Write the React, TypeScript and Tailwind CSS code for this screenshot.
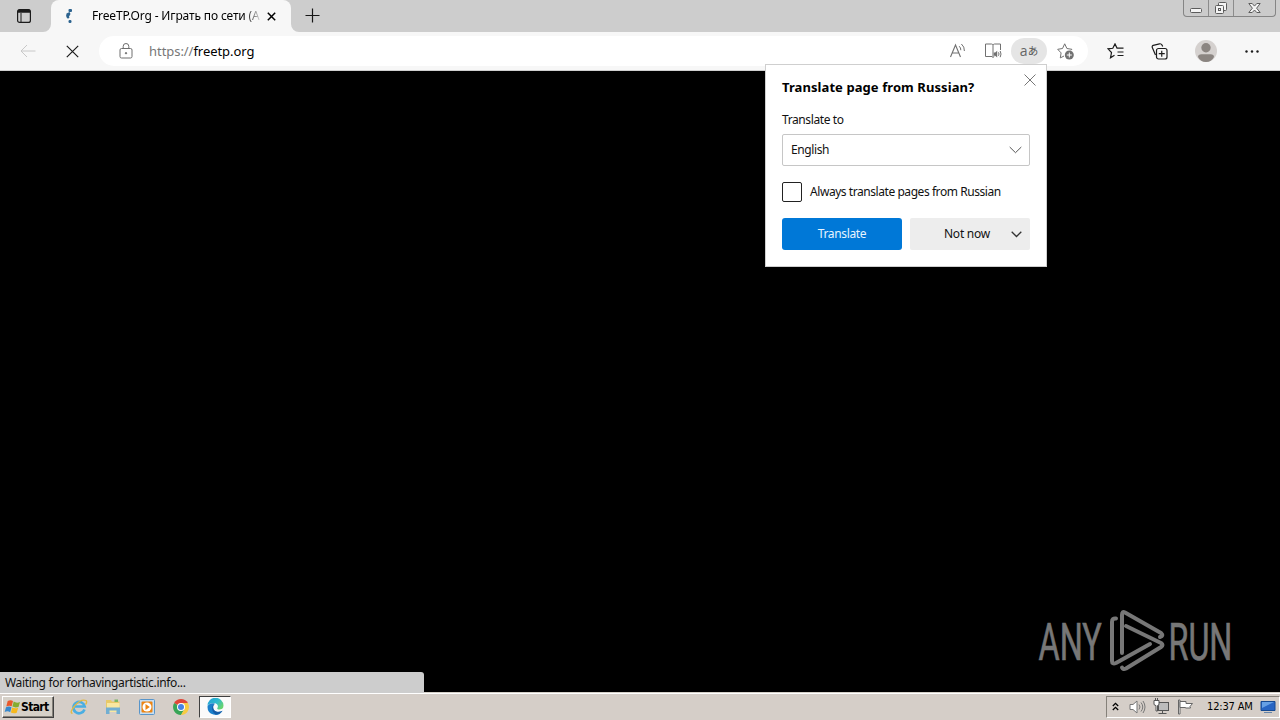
import type { ReactNode } from "react";

/* ---------- Icon wrapper ---------- */
type IconProps = { w: number; h: number; className?: string; children: ReactNode };

function Icon({ w, h, className = "", children }: IconProps) {
  return (
    <svg
      width={w}
      height={h}
      viewBox={`0 0 ${w} ${h}`}
      fill="none"
      stroke="currentColor"
      strokeWidth="1"
      className={`block shrink-0 ${className}`}
    >
      {children}
    </svg>
  );
}

/* ---------- Tab strip ---------- */
function WindowControls() {
  return (
    <div className="ml-auto mr-1 flex h-[17px] w-[93px] rounded-b-[4px] border border-t-0 border-[#858585] bg-[#cbcbcb] text-[#5c5c5c]">
      <div className="flex w-[25px] justify-center border-r border-[#8c8c8c] pt-2">
        <Icon w={13} h={5}>
          <rect x="0.5" y="0.5" width="11" height="4" rx="1" fill="#f4f4f4" />
        </Icon>
      </div>
      <div className="flex w-[25px] justify-center border-r border-[#8c8c8c] pt-[2px]">
        <Icon w={13} h={13}>
          <rect x="3.5" y="0.5" width="8" height="8" rx="1" fill="#f4f4f4" />
          <rect x="0.5" y="3.5" width="8" height="8" rx="1" fill="#f4f4f4" />
          <rect x="3.5" y="6.5" width="2" height="2" />
        </Icon>
      </div>
      <div className="flex flex-1 justify-center pt-[3px]">
        <Icon w={13} h={11}>
          <path d="M0.8 0.5h3.4l2.3 2.6L8.8.5h3.4L8.6 5.2l3.6 4.3H8.8L6.5 7 4.2 9.500H.8l3.6-4.300z" fill="#f4f4f4" />
        </Icon>
      </div>
    </div>
  );
}

function TabStrip() {
  return (
    <div className="flex h-8 bg-[#cdcdcd]">
      <div className="flex w-[43px] items-center pl-[17px]">
        <Icon w={14} h={14} className="text-[#1b1b1b]">
          <rect x="0.6" y="0.6" width="12.8" height="12.8" rx="2" strokeWidth="1.2" />
          <path d="M1 1.500h12M1 3h12" strokeWidth="1.700" />
          <path d="M4 4v9" />
        </Icon>
      </div>
      <Icon w={8} h={8} className="self-end text-[#f7f7f7]">
        <path d="M8 0v8H0a8 8 0 0 0 8-8z" fill="currentColor" stroke="none" />
      </Icon>
      <div className="flex w-[240px] items-center rounded-t-lg bg-[#f7f7f7]">
        <Icon w={8} h={16} className="ml-[14px]">
          <g stroke="none" fill="#2c638f">
            <rect x="3.5" y="1" width="3.5" height="3" rx="1" />
            <path d="M1.500 5.500l3-1.500 1 2-2 3.500L1 8.500z" />
            <circle cx="3" cy="9.3" r="1.2" />
            <rect x="3.5" y="12" width="3" height="3" rx="1.2" />
          </g>
        </Icon>
        <span className="ml-[19px] w-[170px] overflow-hidden whitespace-nowrap bg-linear-to-r from-black from-88% to-[#f7f7f7] bg-clip-text font-['Noto_Sans'] text-[12px] leading-[18px] tracking-[-0.14px] text-transparent">
          FreeTP.Org - Играть по сети (A
        </span>
        <Icon w={9} h={9} className="ml-[5px] text-black">
          <path d="M.8.8l7.400 7.400M8.200.8L.8 8.200" strokeWidth="1.5" />
        </Icon>
      </div>
      <Icon w={8} h={8} className="self-end text-[#f7f7f7]">
        <path d="M0 0v8h8a8 8 0 0 1-8-8z" fill="currentColor" stroke="none" />
      </Icon>
      <Icon w={15} h={15} className="ml-[6px] mt-2 text-[#161616]">
        <path d="M7.500.5v14M.5 7.500h14" strokeWidth="1.2" />
      </Icon>
      <WindowControls />
    </div>
  );
}

/* ---------- Toolbar ---------- */
function AddressBar() {
  return (
    <div className="ml-[19px] flex h-[30px] w-[989px] items-center rounded-full bg-white">
      <Icon w={14} h={16} className="ml-[20px] text-[#6e6e6e]">
        <rect x="1" y="5.5" width="12" height="9.5" rx="1.5" />
        <path d="M4.200 5.500V3.300a2.800 2.800 0 0 1 5.600 0v2.200" />
        <circle cx="7" cy="10.2" r="0.7" fill="currentColor" />
      </Icon>
      <span className="ml-[16px] whitespace-nowrap font-['Noto_Sans'] text-[13px] leading-5 tracking-[-0.05px] text-[#777]">
        https://<span className="text-black">freetp.org</span>
      </span>
      <div className="ml-auto flex items-center text-[#717171]">
        <Icon w={18} h={16} className="mr-[17px]">
          <path d="M1.500 14L6.500 2l5 12M3.300 10h6.400" strokeWidth="1.1" />
          <path d="M10.200 3.200a5 5 0 0 1 1.600 4M12.400 1a8.500 8.500 0 0 1 3 7" />
        </Icon>
        <Icon w={18} h={16} className="mr-[9px]">
          <path d="M9 14.500V2M9 2Q8.500 1 7.500 1H1.500v12.500H8l1 1 1-1M9 2q.5-1 1.500-1h6v6" />
          <path d="M9.700 9.500h1.500l2-1.700v6.700l-2-1.700H9.700z" fill="currentColor" stroke="none" />
          <path d="M14.500 9.300q1 1.700 0 3.500M16.200 8q1.600 3 0 6.200" />
        </Icon>
        <div className="flex h-[26px] w-[36px] items-center justify-center rounded-full bg-[#e5e5e5]">
          <span className="font-['Open_Sans'] text-[14px] leading-4 text-[#666]">a</span>
          <span className="font-['Noto_Sans_CJK_JP',sans-serif] text-[10.5px] leading-4 text-[#555]">あ</span>
        </div>
        <Icon w={18} h={18} className="ml-[10px] mr-[13px]">
          <path d="M7 14l-3.700 1.900.8-5L.7 7.300l4.800-.8L7.700 1.800l2.200 4.700 5 .8-1 1" />
          <circle cx="12.3" cy="13" r="4.5" fill="currentColor" stroke="none" />
          <path d="M12.300 10.500v5M9.800 13h5" stroke="#fff" />
        </Icon>
      </div>
    </div>
  );
}

function Toolbar() {
  return (
    <div className="flex h-[39px] items-center border-b border-[#d0d0d0] bg-[#f7f7f7] text-[#1c1c1c]">
      <Icon w={16} h={14} className="ml-[20px] text-[#c8c8c8]">
        <path d="M15.500 7H1M7 1L1 7l6 6" />
      </Icon>
      <Icon w={13} h={13} className="ml-[29.5px] mr-[1.5px]">
        <path d="M.8.8l11.400 11.400M12.200.8L.8 12.200" strokeWidth="1.2" />
      </Icon>
      <AddressBar />
      <Icon w={18} h={16} className="ml-[19px]">
        <path d="M7.500 12.200l-4 2.600 1-5.300L1 5.800l4.800-.5L8 .9l2 4.200h6.500M10.500 9h6M10.500 12.500h6" strokeWidth="1.2" />
      </Icon>
      <Icon w={17} h={17} className="ml-[26px]">
        <path d="M4.500 12L1.500 5Q.6 3 2.200 2.400L8.500.8q1.700-.3 2.500 1.200l.7 1.500" strokeWidth="1.2" />
        <rect x="5.5" y="5.5" width="10.5" height="10.5" rx="2" strokeWidth="1.2" />
        <path d="M10.750 7.700v6M7.750 10.700h6" strokeWidth="1.2" />
      </Icon>
      <Icon w={22} h={22} className="ml-[27px]">
        <g stroke="none">
          <circle cx="11" cy="11" r="11" fill="#d5d1cf" />
          <circle cx="11" cy="7.7" r="4.7" fill="#8b8581" />
          <path d="M3 17Q3 14.200 6.500 14.200h9Q19 14.200 19 17 16.500 22 11 22t-8-5z" fill="#8b8581" />
        </g>
      </Icon>
      <Icon w={14} h={3} className="ml-[28px]">
        <g fill="currentColor" stroke="none">
          <circle cx="1.5" cy="1.5" r="1.2" />
          <circle cx="7" cy="1.5" r="1.2" />
          <circle cx="12.5" cy="1.5" r="1.2" />
        </g>
      </Icon>
    </div>
  );
}

/* ---------- Translate popup ---------- */
function TranslatePopup() {
  return (
    <div className="absolute left-[765px] top-[64px] h-[203px] w-[282px] border border-[#cfcfcf] bg-white px-4 font-['Noto_Sans'] text-[12px] leading-4 text-[#111]">
      <div className="flex h-[30px] items-end justify-between">
        <h1 className="whitespace-nowrap text-[13px] font-bold leading-4 tracking-[0.08px] text-black">
          Translate page from Russian?
        </h1>
        <button className="mb-[9px] -mr-[6px]" aria-label="Close">
          <Icon w={12} h={12} className="text-[#777]">
            <path d="M.5.5l11 11M11.500.5l-11 11" />
          </Icon>
        </button>
      </div>
      <div className="mt-[17px] tracking-[-0.4px]">Translate to</div>
      <div className="mt-[6px] flex h-8 items-center justify-between rounded-[2px] border border-[#c6c6c6] pl-2 pr-[7px]">
        <span className="tracking-[-0.4px]">English</span>
        <Icon w={13} h={8} className="text-[#555]">
          <path d="M.7 1l5.800 5.700L12.300 1" />
        </Icon>
      </div>
      <div className="mt-4 flex h-5 items-center gap-2">
        <div className="h-5 w-5 rounded-[2px] border border-[#222]" />
        <span className="whitespace-nowrap tracking-[-0.44px]">Always translate pages from Russian</span>
      </div>
      <div className="mt-4 flex gap-2">
        <button className="h-8 w-[120px] rounded-[3px] bg-[#0078d7] tracking-[-0.35px] text-[#e6f4ff]">Translate</button>
        <button className="flex h-8 w-[120px] items-center rounded-[2px] bg-[#ededed] pl-[34px] tracking-[-0.25px]">
          <span>Not now</span>
          <Icon w={11} h={7} className="ml-auto mr-[8px] text-[#333]">
            <path d="M.7.8l4.800 4.700L10.300.8" strokeWidth="1.3" />
          </Icon>
        </button>
      </div>
    </div>
  );
}

/* ---------- ANY.RUN watermark ---------- */
function Watermark() {
  return (
    <div className="mb-5 ml-auto mr-[44px] flex h-[62px] w-[198px] items-center text-[#777]">
      <svg width="198" height="62" viewBox="0 0 198 62" className="block overflow-visible" fill="none">
        <g fill="currentColor" stroke="currentColor" strokeWidth="0.7" className="font-['Roboto']" fontSize="51">
          <text transform="translate(0.5 49.5) scale(.68 1)" textLength="93" lengthAdjust="spacingAndGlyphs">ANY</text>
          <text transform="translate(130.5 49.5) scale(.68 1)" textLength="94" lengthAdjust="spacingAndGlyphs">RUN</text>
        </g>
        <g stroke="currentColor" strokeWidth="4" strokeLinecap="round" strokeLinejoin="round">
          <path d="M84 43V5q0-4 3-2.500l36 20.500q3 3-1 4" />
          <path d="M78 8.500q-4-.5-4 3.500v39q0 3.500 4 2L112 34" />
          <path d="M88 16l35 17q3 2 0 4L88 58.500q-3 1.500-4-1" />
        </g>
      </svg>
    </div>
  );
}

/* ---------- Taskbar ---------- */
function StartButton() {
  return (
    <button className="ml-[2px] flex h-[22px] w-[52px] items-center border border-b-[#404040] border-l-white border-r-[#404040] border-t-white bg-[#d5d0c8] shadow-[inset_-1px_-1px_0_#85817a]">
      <Icon w={17} h={16} className="ml-px">
        <g stroke="none">
          <path d="M3.700 2Q6.500.3 9 2L7.700 7.200Q5.200 6 2.300 7.500z" fill="#e9592b" />
          <path d="M9.700 2.500Q12.500 4.500 16 3L14.500 7.900Q11.300 9 8.400 7.600z" fill="#85ac31" />
          <path d="M2 8.300Q5 7 7.500 8.200L6.200 13.300Q3.700 11.600.7 13z" fill="#3688cd" />
          <path d="M8.200 8.600Q11 10 14.200 8.800L12.700 13.700Q9.800 15 6.900 13.500z" fill="#f6b91e" />
        </g>
      </Icon>
      <span className="font-['DejaVu_Sans_Condensed','DejaVu_Sans'] text-[12px] font-bold leading-4 tracking-[-0.65px] text-black">
        Start
      </span>
    </button>
  );
}

function TaskbarApps() {
  return (
    <>
      <Icon w={18} h={18} className="ml-[16px]">
        <path d="M14.500 11.500A5.700 5.700 0 1 1 14.700 8.500H5" stroke="#4aaee2" strokeWidth="2.6" />
        <path d="M2.500 15.500Q-1 14.500 5 7.500T16 2.500q1.500 1.500-.5 4" stroke="#e2b943" strokeWidth="1.3" />
      </Icon>
      <Icon w={16} h={17} className="ml-[17px]">
        <g stroke="none">
          <path d="M1 2h5l1 1.500h7.500V14H1z" fill="#e8c968" />
          <path d="M2 5h12.500v9H2z" fill="#f8e7a1" />
          <path d="M9.500 1.500H13V4H9.500z" fill="#7bb665" />
          <path d="M1 9.500h14V16h-3.500v-3.500h-7V16H1z" fill="#71aed2" />
        </g>
      </Icon>
      <Icon w={16} h={16} className="ml-[18px]">
        <rect x="0.5" y="0.5" width="15" height="15" rx="1" fill="#c7def2" stroke="#5895ca" />
        <rect x="2.5" y="2.5" width="11" height="11" rx="1" fill="#ed8412" stroke="none" />
        <circle cx="8" cy="8" r="4.5" fill="#fff" stroke="none" />
        <path d="M6.500 5l4.300 3-4.300 3z" fill="#ed8412" stroke="none" />
      </Icon>
      <Icon w={16} h={16} className="ml-[18px]">
        <g stroke="none">
          <path d="M8 8L1.100 4A8 8 0 0 1 14.900 4z" fill="#df4638" />
          <path d="M8 8L1.100 4A8 8 0 0 0 8 16l3.500-6z" fill="#38a557" />
          <path d="M8 4h6.900A8 8 0 0 1 8 16l3.500-6z" fill="#f7cb41" />
          <circle cx="8" cy="8" r="4" fill="#fff" />
          <circle cx="8" cy="8" r="3" fill="#4683e4" />
        </g>
      </Icon>
      <div className="ml-[10px] flex h-[22px] w-8 items-center justify-center border border-b-white border-l-[#404040] border-r-white border-t-[#404040] bg-[#fbfafa]">
        <svg width="17" height="17" viewBox="0 0 17 17" className="block">
          <defs>
            <linearGradient id="edge-top" x1="0" y1="0" x2="1" y2="0.6">
              <stop offset="0" stopColor="#219fd7" />
              <stop offset="0.6" stopColor="#30bbce" />
              <stop offset="1" stopColor="#67d36f" />
            </linearGradient>
          </defs>
          <path d="M.5 8A8 8 0 0 1 16.500 7.500c0 3-2 4-4.300 4-1.800 0-2.400-.8-1.700-1.800C12 7 9 4.500 6 5 3 5.300 1 6.500.5 8z" fill="url(#edge-top)" />
          <path d="M.5 8.500C1.200 5.800 5 4.400 8 5.700 5 7 5.500 12 9 13.500c2.300 1 4.500.4 6.500-.8A8 8 0 0 1 .5 8.500z" fill="#1b7fcb" />
          <path d="M8 5.700C4.600 6.400 3.600 13 8.500 16.400 11.500 16.300 14 15 15.500 12.700c-2 1.200-4.300 1.500-6.500.8C5.500 12 5.400 7.500 8 5.700z" fill="#165ca6" />
        </svg>
      </div>
    </>
  );
}

function SystemTray() {
  return (
    <div className="ml-auto flex h-[22px] w-[174px] items-center border border-b-white border-l-[#85817a] border-r-white border-t-[#85817a]">
      <Icon w={7} h={9} className="ml-[5px] text-black">
        <path d="M.8 4l2.700-2.700L6.200 4M.8 8l2.700-2.700L6.200 8" strokeWidth="1.3" />
      </Icon>
      <Icon w={17} h={16} className="ml-[10px] text-[#777]">
        <path d="M1 5.500h3L8 2v12l-4-3.500H1z" fill="#fff" />
        <path d="M10 5.500q2 2.500 0 5M12 3.500q3.500 4.500 0 9M14 2q4 6 0 12" />
      </Icon>
      <Icon w={17} h={17} className="ml-[7px] text-[#555]">
        <rect x="5.5" y="4.5" width="10" height="8" fill="#bcbcbc" />
        <path d="M5.500 15.500h8M9.500 13v2" />
        <path d="M1 2.500h5V6q0 1.500-1.500 1.500V13H3V7.500Q1 7.500 1 6zM2.500 0v2M4.500 0v2" fill="#fff" />
      </Icon>
      <Icon w={17} h={16} className="ml-[7px] text-[#666]">
        <path d="M1.500 1h1.500v14H1.500z" fill="#fff" />
        <path d="M3 2.500h6v2h6.500l-2.500 3 .5 1.500H8.500V8.500H3z" fill="#fff" />
      </Icon>
      <span className="ml-[13px] w-[48px] whitespace-nowrap font-['DejaVu_Sans_Condensed','DejaVu_Sans'] text-[11px] leading-4 tracking-[-0.15px] text-black">
        12:37 AM
      </span>
      <Icon w={16} h={14} className="ml-[5px]">
        <path d="M1 1.500h14v9H1z" fill="#2865c3" stroke="#164a92" />
        <path d="M2 2h12L2 8z" fill="#66a0e5" stroke="none" />
        <path d="M4 12.500h8" stroke="#6685a9" />
      </Icon>
    </div>
  );
}

export default function App() {
  return (
    <div className="relative flex h-[720px] w-[1280px] flex-col overflow-hidden bg-black">
      <TabStrip />
      <Toolbar />
      <TranslatePopup />
      <main className="flex flex-1 flex-col justify-end">
        <Watermark />
      </main>
      <div className="absolute left-0 top-[672px] flex h-[21px] w-[424px] items-center rounded-tr-[3px] bg-[#cdcdcd] pl-[5px] font-['Noto_Sans'] text-[12px] leading-4 tracking-[-0.33px] text-[#111]">
        Waiting for forhavingartistic.info...
      </div>
      <footer className="flex h-7 shrink-0 items-center border-t border-[#d5d0c8] bg-[#d5cec8] shadow-[inset_0_1px_0_white]">
        <StartButton />
        <TaskbarApps />
        <SystemTray />
      </footer>
    </div>
  );
}
